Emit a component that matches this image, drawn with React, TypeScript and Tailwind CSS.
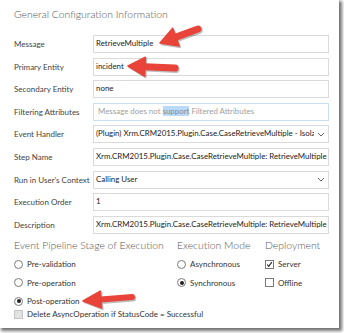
import * as React from 'react';

// ============================================================================
// ICONS
// ============================================================================

const ChevronDownIcon = (): React.JSX.Element => (
  <svg width="8" height="5" viewBox="0 0 8 5" fill="none" stroke="#666" strokeWidth="1">
    <polyline points="1,1 4,4 7,1" />
  </svg>
);

const CheckIcon = (): React.JSX.Element => (
  <svg width="9" height="9" viewBox="0 0 9 9" fill="none" stroke="#222" strokeWidth="1.4">
    <polyline points="1.5,4.5 3.5,7 7.5,1.5" />
  </svg>
);

// red callout arrows drawn over the form
type Pt = [number, number];

function arrowHead(tail: Pt, tip: Pt, headLen: number, headWidth: number): { base: Pt; points: string } {
  const dx = tip[0] - tail[0];
  const dy = tip[1] - tail[1];
  const len = Math.hypot(dx, dy);
  const ux = dx / len;
  const uy = dy / len;
  const base: Pt = [tip[0] - ux * headLen, tip[1] - uy * headLen];
  const px = -uy * (headWidth / 2);
  const py = ux * (headWidth / 2);
  const points = `${tip[0]},${tip[1]} ${base[0] + px},${base[1] + py} ${base[0] - px},${base[1] - py}`;
  return { base, points };
}

const Arrow = ({ tail, tip, shaft = 7, headLen = 17, headWidth = 19 }: {
  tail: Pt;
  tip: Pt;
  shaft?: number;
  headLen?: number;
  headWidth?: number;
}): React.JSX.Element => {
  const { base, points } = arrowHead(tail, tip, headLen, headWidth);
  return (
    <g>
      <g transform="translate(1.2,1.4)" opacity="0.25">
        <line x1={tail[0]} y1={tail[1]} x2={base[0]} y2={base[1]} stroke="#000" strokeWidth={shaft} strokeLinecap="round" />
        <polygon points={points} fill="#000" strokeLinejoin="round" stroke="#000" strokeWidth="1.5" />
      </g>
      <line x1={tail[0]} y1={tail[1]} x2={base[0]} y2={base[1]} stroke="#e8443a" strokeWidth={shaft} strokeLinecap="round" />
      <polygon points={points} fill="#e8443a" stroke="#e8443a" strokeWidth="1.5" strokeLinejoin="round" />
    </g>
  );
};

// ============================================================================
// PIECES
// ============================================================================

const TextBox = ({ children, select = false, className = '' }: {
  children?: React.ReactNode;
  select?: boolean;
  className?: string;
}): React.JSX.Element => (
  <div
    className={`flex h-[18px] items-center overflow-hidden whitespace-nowrap border bg-white pl-[2px] text-[7.9px] text-[#222] ${className || 'border-[#dadada]'}`}
  >
    <span className="min-w-0 flex-1 overflow-hidden">{children}</span>
    {select && (
      <span className="flex w-[14px] shrink-0 justify-center">
        <ChevronDownIcon />
      </span>
    )}
  </div>
);

const Radio = ({ checked = false }: { checked?: boolean }): React.JSX.Element => (
  <span className="flex h-[9px] w-[9px] shrink-0 items-center justify-center rounded-full border border-[#7a7a7a] bg-white">
    {checked && <span className="h-[4px] w-[4px] rounded-full bg-[#222]" />}
  </span>
);

const Check = ({ checked = false, disabled = false }: { checked?: boolean; disabled?: boolean }): React.JSX.Element => (
  <span
    className={`flex h-[9px] w-[9px] shrink-0 items-center justify-center border ${
      disabled ? 'border-[#c4c4c4] bg-[#e2e2e2]' : 'border-[#7a7a7a] bg-white'
    }`}
  >
    {checked && <CheckIcon />}
  </span>
);

const Option = ({ control, label }: { control: React.ReactNode; label: string }): React.JSX.Element => (
  <div className="flex h-[18.5px] items-center gap-[4px] whitespace-nowrap text-[8px] text-[#333]">
    {control}
    <span>{label}</span>
  </div>
);

// ============================================================================
// APP
// ============================================================================

const rows: { label: string; value: React.ReactNode; select?: boolean; cls?: string }[] = [
  { label: 'Message', value: 'RetrieveMultiple' },
  { label: 'Primary Entity', value: 'incident' },
  { label: 'Secondary Entity', value: 'none' },
  {
    label: 'Filtering Attributes',
    cls: 'border-[#c9dff2]',
    value: (
      <span className="pl-[2px] text-[#a0a0a0]">
        Message does not <span className="bg-[#b9dafa] text-[#8a8a8a]">support</span> Filtered Attributes
      </span>
    ),
  },
  { label: 'Event Handler', value: '(Plugin) Xrm.CRM2015.Plugin.Case.CaseRetrieveMultiple - Isolation', select: true },
  { label: 'Step Name', value: 'Xrm.CRM2015.Plugin.Case.CaseRetrieveMultiple: RetrieveMultiple' },
  { label: "Run in User's Context", value: 'Calling User', select: true },
  { label: 'Execution Order', value: '1' },
  { label: 'Description', value: 'Xrm.CRM2015.Plugin.Case.CaseRetrieveMultiple: RetrieveMultiple' },
];

const heading = 'h-[16px] whitespace-nowrap text-[10.4px] font-light leading-[16px] text-[#555]';

export default function App(): React.JSX.Element {
  return (
    <div className="h-[333px] w-[344px] bg-white" style={{ fontFamily: 'Lato, "Open Sans", sans-serif' }}>
      <div className="relative h-[328px] w-[339px] bg-white pl-[14px] pt-[6px] shadow-[2px_2px_3px_1px_rgba(0,0,0,0.55)]">
        <h1 className={heading}>General Configuration Information</h1>

        <div className="mt-[13px] grid grid-cols-[79px_236px] items-center gap-y-[4.6px]">
          {rows.map((r) => (
            <React.Fragment key={r.label}>
              <div className="whitespace-nowrap text-[8px] text-[#444]">{r.label}</div>
              <TextBox select={r.select} className={r.cls}>
                {r.value}
              </TextBox>
            </React.Fragment>
          ))}
        </div>

        <div className="mt-[3px] flex">
          <div className="w-[163px]">
            <h2 className={heading}>Event Pipeline Stage of Execution</h2>
            <div className="mt-[2px]">
              <Option control={<Radio />} label="Pre-validation" />
              <Option control={<Radio />} label="Pre-operation" />
              <Option control={<Radio checked />} label="Post-operation" />
            </div>
          </div>
          <div className="w-[88px]">
            <h2 className={heading}>Execution Mode</h2>
            <div className="mt-[2px]">
              <Option control={<Radio />} label="Asynchronous" />
              <Option control={<Radio checked />} label="Synchronous" />
            </div>
          </div>
          <div>
            <h2 className={heading}>Deployment</h2>
            <div className="mt-[2px]">
              <Option control={<Check checked />} label="Server" />
              <Option control={<Check />} label="Offline" />
            </div>
          </div>
        </div>

        <div className="mt-[-3px] flex h-[14px] items-center gap-[4px] whitespace-nowrap text-[8px] text-[#333]">
          <Check disabled />
          <span>Delete AsyncOperation if StatusCode = Successful</span>
        </div>

        <svg className="pointer-events-none absolute left-0 top-0" width="339" height="328" viewBox="0 0 339 328">
          <Arrow tail={[198, 29]} tip={[160, 43]} />
          <Arrow tail={[175, 68]} tip={[128, 66]} />
          <Arrow tail={[132, 297]} tip={[83, 301]} shaft={6} headLen={18} headWidth={17} />
        </svg>
      </div>
    </div>
  );
}
